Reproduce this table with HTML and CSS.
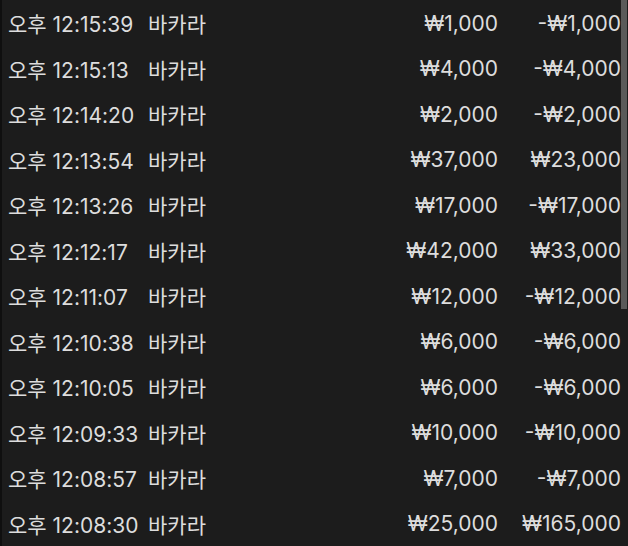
FILE: index.html
```html
<!DOCTYPE html>
<html lang="ko">
<head>
<meta charset="utf-8">
<link rel="stylesheet" href="styles.css">
</head>
<body>
<div class="screen">
  <div class="list">
    <div class="row"><span class="time">오후 12:15:39</span><span class="game">바카라</span><span class="amt">₩1,000</span><span class="res">-₩1,000</span></div>
    <div class="row"><span class="time">오후 12:15:13</span><span class="game">바카라</span><span class="amt">₩4,000</span><span class="res">-₩4,000</span></div>
    <div class="row"><span class="time">오후 12:14:20</span><span class="game">바카라</span><span class="amt">₩2,000</span><span class="res">-₩2,000</span></div>
    <div class="row"><span class="time">오후 12:13:54</span><span class="game">바카라</span><span class="amt">₩37,000</span><span class="res">₩23,000</span></div>
    <div class="row"><span class="time">오후 12:13:26</span><span class="game">바카라</span><span class="amt">₩17,000</span><span class="res">-₩17,000</span></div>
    <div class="row"><span class="time">오후 12:12:17</span><span class="game">바카라</span><span class="amt">₩42,000</span><span class="res">₩33,000</span></div>
    <div class="row"><span class="time">오후 12:11:07</span><span class="game">바카라</span><span class="amt">₩12,000</span><span class="res">-₩12,000</span></div>
    <div class="row"><span class="time">오후 12:10:38</span><span class="game">바카라</span><span class="amt">₩6,000</span><span class="res">-₩6,000</span></div>
    <div class="row"><span class="time">오후 12:10:05</span><span class="game">바카라</span><span class="amt">₩6,000</span><span class="res">-₩6,000</span></div>
    <div class="row"><span class="time">오후 12:09:33</span><span class="game">바카라</span><span class="amt">₩10,000</span><span class="res">-₩10,000</span></div>
    <div class="row"><span class="time">오후 12:08:57</span><span class="game">바카라</span><span class="amt">₩7,000</span><span class="res">-₩7,000</span></div>
    <div class="row"><span class="time">오후 12:08:30</span><span class="game">바카라</span><span class="amt">₩25,000</span><span class="res">₩165,000</span></div>
  </div>
  <div class="scrollbar"></div>
</div>
</body>
</html>
```

FILE: styles.css
```css
html, body {
  margin: 0;
  padding: 0;
  background: #1c1c1c;
}
.screen {
  position: relative;
  width: 628px;
  height: 546px;
  overflow: hidden;
  background: #1c1c1c;
  border-left: 2px solid #0f0f0f;
  box-sizing: border-box;
  font-family: Inter, "Noto Sans CJK KR", sans-serif;
  font-size: 21px;
  color: #dddddd;
}
.list {
  display: flex;
  flex-direction: column;
}
.row {
  display: grid;
  grid-template-columns: 140px 1fr 120px 123px;
  align-items: center;
  height: 45.5px;
  padding: 1px 7px 0 6px;
  box-sizing: border-box;
  white-space: nowrap;
}
.game {
  font-family: "Noto Sans CJK KR", sans-serif;
}
.amt, .res {
  text-align: right;
}
.scrollbar {
  position: absolute;
  top: 0;
  right: 1px;
  width: 6px;
  height: 309px;
  background: #5a5a5a;
}
```
